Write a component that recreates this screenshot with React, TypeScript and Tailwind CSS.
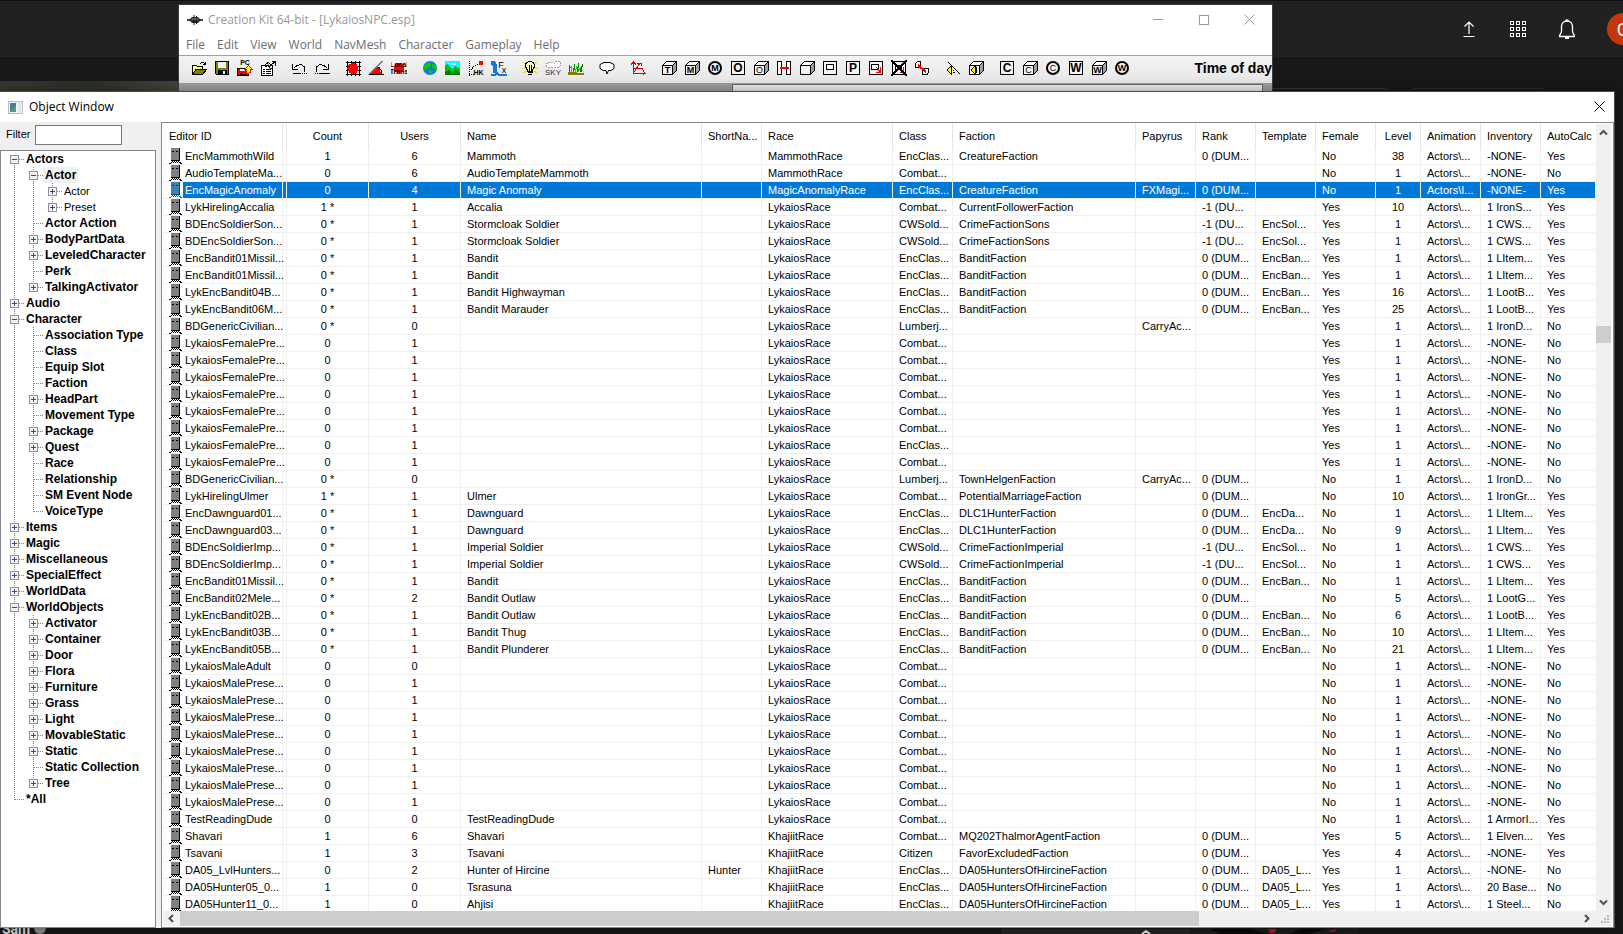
import React, { useState } from 'react';

type Row = string[];

const COLUMNS = [
  { label: 'Editor ID', width: 'w-[120px]', center: false },
  { label: '', width: 'w-[4px]', center: false },
  { label: 'Count', width: 'w-[82px]', center: true },
  { label: 'Users', width: 'w-[92px]', center: true },
  { label: 'Name', width: 'w-[241px]', center: false },
  { label: 'ShortNa...', width: 'w-[60px]', center: false },
  { label: 'Race', width: 'w-[131px]', center: false },
  { label: 'Class', width: 'w-[60px]', center: false },
  { label: 'Faction', width: 'w-[183px]', center: false },
  { label: 'Papyrus', width: 'w-[60px]', center: false },
  { label: 'Rank', width: 'w-[60px]', center: false },
  { label: 'Template', width: 'w-[60px]', center: false },
  { label: 'Female', width: 'w-[60px]', center: false },
  { label: 'Level', width: 'w-[45px]', center: true },
  { label: 'Animation', width: 'w-[60px]', center: false },
  { label: 'Inventory', width: 'w-[60px]', center: false },
  { label: 'AutoCalc', width: '', center: false },
];

const LYK = 'LykaiosRace';
const ENC = 'EncClas...';
const COM = 'Combat...';
const CW = 'CWSold...';
const DUM = '0 (DUM...';
const DU = '-1 (DU...';
const ACT = 'Actors\\...';
const NONE = '-NONE-';

const female = (cls: string): Row => ['LykaiosFemalePre...', '', '0', '1', '', '', LYK, cls, '', '', '', '', 'Yes', '1', ACT, NONE, 'No'];
const male = (): Row => ['LykaiosMalePrese...', '', '0', '1', '', '', LYK, COM, '', '', '', '', 'No', '1', ACT, NONE, 'No'];
const stormcloak = (): Row => ['BDEncSoldierSon...', '', '0 *', '1', 'Stormcloak Soldier', '', LYK, CW, 'CrimeFactionSons', '', DU, 'EncSol...', 'Yes', '1', ACT, '1 CWS...', 'Yes'];
const imperial = (): Row => ['BDEncSoldierImp...', '', '0 *', '1', 'Imperial Soldier', '', LYK, CW, 'CrimeFactionImperial', '', DU, 'EncSol...', 'No', '1', ACT, '1 CWS...', 'Yes'];
const bandit = (id: string, users: string, name: string, template: string, sex: string, level: string, inventory: string): Row =>
  [id, '', '0 *', users, name, '', LYK, ENC, 'BanditFaction', '', DUM, template, sex, level, ACT, inventory, 'Yes'];
const hunter = (id: string, count: string, users: string, name: string, short: string, inventory: string): Row =>
  [id, '', count, users, name, short, 'KhajiitRace', ENC, 'DA05HuntersOfHircineFaction', '', DUM, 'DA05_L...', 'Yes', '1', ACT, inventory, 'No'];

const ROWS: Row[] = [
  ['EncMammothWild', '', '1', '6', 'Mammoth', '', 'MammothRace', ENC, 'CreatureFaction', '', DUM, '', 'No', '38', ACT, NONE, 'Yes'],
  ['AudioTemplateMa...', '', '0', '6', 'AudioTemplateMammoth', '', 'MammothRace', COM, '', '', '', '', 'No', '1', ACT, NONE, 'No'],
  ['EncMagicAnomaly', '', '0', '4', 'Magic Anomaly', '', 'MagicAnomalyRace', ENC, 'CreatureFaction', 'FXMagi...', DUM, '', 'No', '1', 'Actors\\I...', NONE, 'Yes'],
  ['LykHirelingAccalia', '', '1 *', '1', 'Accalia', '', LYK, COM, 'CurrentFollowerFaction', '', DU, '', 'Yes', '10', ACT, '1 IronS...', 'Yes'],
  stormcloak(),
  stormcloak(),
  bandit('EncBandit01Missil...', '1', 'Bandit', 'EncBan...', 'Yes', '1', '1 LItem...'),
  bandit('EncBandit01Missil...', '1', 'Bandit', 'EncBan...', 'Yes', '1', '1 LItem...'),
  bandit('LykEncBandit04B...', '1', 'Bandit Highwayman', 'EncBan...', 'Yes', '16', '1 LootB...'),
  bandit('LykEncBandit06M...', '1', 'Bandit Marauder', 'EncBan...', 'Yes', '25', '1 LootB...'),
  ['BDGenericCivilian...', '', '0 *', '0', '', '', LYK, 'Lumberj...', '', 'CarryAc...', '', '', 'Yes', '1', ACT, '1 IronD...', 'No'],
  female(COM),
  female(COM),
  female(COM),
  female(COM),
  female(COM),
  female(COM),
  female(ENC),
  female(COM),
  ['BDGenericCivilian...', '', '0 *', '0', '', '', LYK, 'Lumberj...', 'TownHelgenFaction', 'CarryAc...', DUM, '', 'No', '1', ACT, '1 IronD...', 'No'],
  ['LykHirelingUlmer', '', '1 *', '1', 'Ulmer', '', LYK, COM, 'PotentialMarriageFaction', '', DUM, '', 'No', '10', ACT, '1 IronGr...', 'Yes'],
  ['EncDawnguard01...', '', '0 *', '1', 'Dawnguard', '', LYK, ENC, 'DLC1HunterFaction', '', DUM, 'EncDa...', 'No', '1', ACT, '1 LItem...', 'Yes'],
  ['EncDawnguard03...', '', '0 *', '1', 'Dawnguard', '', LYK, ENC, 'DLC1HunterFaction', '', DUM, 'EncDa...', 'No', '9', ACT, '1 LItem...', 'Yes'],
  imperial(),
  imperial(),
  bandit('EncBandit01Missil...', '1', 'Bandit', 'EncBan...', 'No', '1', '1 LItem...'),
  bandit('EncBandit02Mele...', '2', 'Bandit Outlaw', '', 'No', '5', '1 LootG...'),
  bandit('LykEncBandit02B...', '1', 'Bandit Outlaw', 'EncBan...', 'No', '6', '1 LootB...'),
  bandit('LykEncBandit03B...', '1', 'Bandit Thug', 'EncBan...', 'No', '10', '1 LItem...'),
  bandit('LykEncBandit05B...', '1', 'Bandit Plunderer', 'EncBan...', 'No', '21', '1 LItem...'),
  ['LykaiosMaleAdult', '', '0', '0', '', '', LYK, COM, '', '', '', '', 'No', '1', ACT, NONE, 'No'],
  male(),
  male(),
  male(),
  male(),
  male(),
  male(),
  male(),
  male(),
  ['TestReadingDude', '', '0', '0', 'TestReadingDude', '', LYK, COM, '', '', '', '', 'No', '1', ACT, '1 ArmorI...', 'Yes'],
  ['Shavari', '', '1', '6', 'Shavari', '', 'KhajiitRace', COM, 'MQ202ThalmorAgentFaction', '', DUM, '', 'Yes', '5', ACT, '1 Elven...', 'Yes'],
  ['Tsavani', '', '1', '3', 'Tsavani', '', 'KhajiitRace', 'Citizen', 'FavorExcludedFaction', '', DUM, '', 'Yes', '4', ACT, NONE, 'Yes'],
  hunter('DA05_LvlHunters...', '0', '2', 'Hunter of Hircine', 'Hunter', NONE),
  hunter('DA05Hunter05_0...', '1', '0', 'Tsrasuna', '', '20 Base...'),
  hunter('DA05Hunter11_0...', '1', '0', 'Ahjisi', '', '1 Steel...'),
];

// guides: one letter per indent column.
// v = passing line, p/m = plus/minus box, t = branch, l = last branch, P = plus box on the last branch
const TREE: [string, string][] = [
  ['f', 'Actors'],
  ['vF', 'Actor'],
  ['vvp', 'Actor'],
  ['vvP', 'Preset'],
  ['vt', 'Actor Action'],
  ['vp', 'BodyPartData'],
  ['vp', 'LeveledCharacter'],
  ['vt', 'Perk'],
  ['vP', 'TalkingActivator'],
  ['p', 'Audio'],
  ['m', 'Character'],
  ['vt', 'Association Type'],
  ['vt', 'Class'],
  ['vt', 'Equip Slot'],
  ['vt', 'Faction'],
  ['vp', 'HeadPart'],
  ['vt', 'Movement Type'],
  ['vp', 'Package'],
  ['vp', 'Quest'],
  ['vt', 'Race'],
  ['vt', 'Relationship'],
  ['vt', 'SM Event Node'],
  ['vl', 'VoiceType'],
  ['p', 'Items'],
  ['p', 'Magic'],
  ['p', 'Miscellaneous'],
  ['p', 'SpecialEffect'],
  ['p', 'WorldData'],
  ['m', 'WorldObjects'],
  ['vp', 'Activator'],
  ['vp', 'Container'],
  ['vp', 'Door'],
  ['vp', 'Flora'],
  ['vp', 'Furniture'],
  ['vp', 'Grass'],
  ['vp', 'Light'],
  ['vp', 'MovableStatic'],
  ['vp', 'Static'],
  ['vt', 'Static Collection'],
  ['vP', 'Tree'],
  ['l', '*All'],
];

const Guide: React.FC<{ kind: string }> = ({ kind }) => {
  const half = kind === 'l' || kind === 'P';
  const first = kind === 'f';
  const box = 'pPmfF'.includes(kind);
  const minus = 'mfF'.includes(kind);
  return (
    <svg width="19" height="16" viewBox="0 0 19 16" shapeRendering="crispEdges" className="shrink-0" aria-hidden="true">
      <path d={`M9.5 ${first ? 8 : 0}V${half ? 9 : 16}`} stroke="#808080" strokeDasharray="1 1" />
      {kind !== 'v' && <path d="M10 8.5H19" stroke="#808080" strokeDasharray="1 1" />}
      {box && <rect x="5.5" y="4.5" width="8" height="8" rx="1" fill="#f4f4f4" stroke="#919191" />}
      {box && <path d="M7 8.5H12" stroke="#2b4a9b" />}
      {box && !minus && <path d="M9.5 6V11" stroke="#2b4a9b" />}
    </svg>
  );
};

const ActorIcon: React.FC<{ selected: boolean }> = ({ selected }) => (
  <svg width="16" height="16" viewBox="0 0 16 16" shapeRendering="crispEdges" className="shrink-0" aria-hidden="true">
    <rect x="4" y="0" width="8" height="12" fill={selected ? '#4080b4' : '#808080'} />
    <path d="M12.5 0V13M4 12.5H13" stroke={selected ? '#004a8c' : '#000'} />
    <path d="M5 3h2v1h-2zM9 3h2v1h-2z" fill={selected ? '#00305c' : '#000'} />
    <path d="M5 13.5H12M4 14.5H12" stroke={selected ? '#0060b0' : '#000'} strokeDasharray="1 1" />
    <path d="M2 15.5H4M4 14.5H5M12 14.5H14M13 15.5H15" stroke={selected ? '#0078d7' : '#000'} />
  </svg>
);

const Letter: React.FC<{ x: number; y: number; size: number; children: string; bold?: boolean; color?: string }> = ({ x, y, size, children, bold = true, color = '#000' }) => (
  <text x={x} y={y} fontSize={size} fontWeight={bold ? 700 : 400} textAnchor="middle" fontFamily="Liberation Sans, sans-serif" fill={color}>
    {children}
  </text>
);

const Cube: React.FC<{ letter?: string; bold?: boolean }> = ({ letter, bold }) => (
  <>
    <path d="M1.5 5.5L5.5 1.5H15.5L11.5 5.5Z" fill="#fff" stroke="#000" />
    <path d="M11.5 5.5L15.5 1.5V10.5L11.5 14.5Z" fill="#a0a0a0" stroke="#000" />
    <rect x="1.5" y="5.5" width="10" height="9" fill="#f4f4f4" stroke="#000" />
    {letter && <Letter x={6.5} y={13} size={9} bold={bold}>{letter}</Letter>}
  </>
);

const Square: React.FC<{ letter?: string }> = ({ letter }) => (
  <>
    <rect x="1.5" y="1.5" width="13" height="13" fill="#f4f4f4" stroke="#000" />
    {letter && <Letter x={8} y={12} size={12}>{letter}</Letter>}
  </>
);

const Ring: React.FC<{ letter: string; bold?: boolean }> = ({ letter, bold }) => (
  <>
    <circle cx="8" cy="8" r="6" fill="#f4f4f4" stroke="#000" strokeWidth="2" shapeRendering="auto" />
    <Letter x={8} y={11} size={9} bold={bold}>{letter}</Letter>
  </>
);

const TOOL_GROUPS: { name: string; art: React.ReactNode }[][] = [
  [
    {
      name: 'Open',
      art: (
        <>
          <path d="M1.5 14.5V5.5H5.5L6.5 6.5H11.5V9" fill="#ffff80" stroke="#000" />
          <path d="M1.5 14.5L5 9.5H15.5L11.5 14.5Z" fill="#808000" stroke="#000" />
          <path d="M9 3.5L10.5 2.5H12.5L14.5 4.5M14.5 2V5M12 4.5H15" fill="none" stroke="#000" />
        </>
      ),
    },
    {
      name: 'Save',
      art: (
        <>
          <path d="M1.5 1.5H14.5V14.5H2.5L1.5 13.5Z" fill="#808000" stroke="#000" />
          <rect x="4" y="2" width="8" height="6" fill="#f0f0f0" />
          <rect x="4" y="10" width="9" height="5" fill="#000" />
          <rect x="9" y="11" width="2" height="3" fill="#f0f0f0" />
        </>
      ),
    },
    {
      name: 'Save for PC',
      art: (
        <>
          <path d="M0.5 8.5H11.5V15.5H0.5Z" fill="#f00" stroke="#000" />
          <path d="M3 9H8V11H3Z" fill="#f0f0f0" />
          <path d="M3 13H9V16H3Z" fill="#000" />
          <path d="M6 13.5L9.500 12V9.500H7.500L11.500 5.500L15.500 9.500H13.500V12L10 14Z" fill="#ff0" stroke="#f00" />
          <Letter x={8} y={5} size={7}>PC</Letter>
        </>
      ),
    },
    {
      name: 'Properties',
      art: (
        <>
          <path d="M1.5 5.5H12.5V15.5H1.5Z" fill="#fff" stroke="#000" />
          <path d="M3 9.5H5M6 9.5H11M3 11.5H5M6 11.5H11M3 13.5H5M6 13.5H11" stroke="#000" />
          <path d="M4 6L8 2.5L11 4.5L15 2M5 7L8 5L10 8H12" fill="none" stroke="#000" />
          <path d="M15.5 1V6M12 1.5H15" stroke="#000080" />
          <path d="M8 4L11 7" stroke="#a0a0a0" />
        </>
      ),
    },
  ],
  [
    {
      name: 'Undo',
      art: (
        <>
          <path d="M3 8L6 5.5L10 4.5L13 6.5L14 9L13 11.5" fill="none" stroke="#000" />
          <path d="M1.5 4V9.5H7" fill="none" stroke="#000" />
          <path d="M2 13.5H10" stroke="#000" />
          <path d="M11 13.5H16" stroke="#000" strokeDasharray="1 1" />
        </>
      ),
    },
    {
      name: 'Redo',
      art: (
        <>
          <path d="M13 8L10 5.5L6 4.5L3 6.5L2 9L3 11.5" fill="none" stroke="#000" />
          <path d="M14.5 4V9.5H9" fill="none" stroke="#000" />
          <path d="M6 13.5H16" stroke="#000" />
          <path d="M1 13.5H6" stroke="#000" strokeDasharray="1 1" />
        </>
      ),
    },
  ],
  [
    {
      name: 'Snap to grid',
      art: (
        <>
          <path d="M2.5 1V16M6.5 1V16M10.5 1V16M14.5 1V16M1 2.5H16M1 6.5H16M1 10.5H16M1 14.5H16" stroke="#000" />
          <circle cx="8" cy="8.5" r="5.5" fill="#f00" />
        </>
      ),
    },
    {
      name: 'Snap to angle',
      art: (
        <>
          <path d="M1 14.5L14.5 1" stroke="#000" shapeRendering="auto" />
          <path d="M2 14L9 7L12 9.5L13 14Z" fill="#f00" />
          <path d="M1 14.5H16M10.500 7L13 10V14" fill="none" stroke="#000" />
        </>
      ),
    },
    {
      name: 'Local transform',
      art: (
        <>
          <circle cx="8" cy="8" r="5" fill="#f00" />
          <Letter x={8} y={7} size={7}>Local</Letter>
          <Letter x={8} y={14} size={7}>Trans</Letter>
        </>
      ),
    },
  ],
  [
    {
      name: 'World testing',
      art: (
        <>
          <circle cx="8" cy="8" r="7" fill="#1478d8" shapeRendering="auto" />
          <path d="M3 4L8 2L9 5L6 8L3 9L1 8ZM10 4L14 5L15 9L12 10L10 7ZM7 10L11 11L9 14L7 13Z" fill="#00d000" />
        </>
      ),
    },
    {
      name: 'Landscape editing',
      art: (
        <>
          <rect x="0" y="1" width="15" height="14" fill="#00ffff" />
          <path d="M0 5L3 4L7 9L10 6L12 7L15 9V15H0Z" fill="#00c000" />
          <path d="M0 12L4 10L7 13L11 10L15 13V15H0Z" fill="#008000" />
          <path d="M6 3h5v2H6zM3 3h2v1H3z" fill="#fff" />
        </>
      ),
    },
    {
      name: 'Havok',
      art: (
        <>
          <path d="M1.5 1V16M1 14.5H6" stroke="#000" strokeDasharray="1 1" />
          <path d="M3 10L6 6L11 4" fill="none" stroke="#000" strokeDasharray="1 1" />
          <circle cx="13" cy="3" r="2.5" fill="#f00" />
          <Letter x={10.5} y={15} size={7}>HK</Letter>
        </>
      ),
    },
    {
      name: 'Effects',
      art: (
        <>
          <path d="M0 1H4L6 5V13H2V7L0 5Z" fill="#1478d8" />
          <path d="M0 15H4L6 13L8 15H16" fill="none" stroke="#1478d8" strokeWidth="2" />
          <Letter x={10} y={8} size={9} bold={false}>F</Letter>
          <Letter x={13} y={13} size={9} bold={false}>x</Letter>
        </>
      ),
    },
  ],
  [
    {
      name: 'Lights',
      art: (
        <>
          <path d="M0 2L4 4M0 8H3M1 13L4 11M15 2L12 4M16 8H13M15 13L12 11" stroke="#e8e000" />
          <path d="M8 1.5C5 1.5 3.5 3.5 3.5 6C3.5 8 5.5 9 5.5 11H10.5C10.5 9 12.5 8 12.5 6C12.5 3.5 11 1.5 8 1.5Z" fill="#ffffc0" stroke="#000" />
          <path d="M7 5V11M9 5V11" stroke="#000" />
          <path d="M6 12.5H11M6 14.5H10" stroke="#000" />
          <path d="M7 13.5H10" stroke="#e8e000" />
        </>
      ),
    },
    {
      name: 'Sky',
      art: (
        <>
          <path d="M2 7L1 4L4 2H7L9 4L11 1H15V6L13 8Z" fill="#fff" stroke="#a0a0a0" strokeDasharray="2 1" />
          <Letter x={8} y={15} size={8} bold={false} color="#303030">SKY</Letter>
        </>
      ),
    },
    {
      name: 'Grass',
      art: (
        <>
          <path d="M2 12L1 5M4 12L3 8L1 7M5 12L7 4M8 12L6 7M9 12L11 3M11 12L9 7M12 12L15 4M13 12V6" fill="none" stroke="#008000" />
          <path d="M3 12L4 6M7 12L9 6M10 12L13 7" stroke="#00e000" />
          <path d="M0 12H8L9 13H16V15H0Z" fill="#808000" />
        </>
      ),
    },
  ],
  [
    {
      name: 'Dialogue',
      art: (
        <path
          d="M5 2.5H11L15 4.5V8.5L12 10.5H9.5L8 14L7 10.5H4L1 8.5V4.5Z"
          fill="#fff"
          stroke="#000"
          shapeRendering="auto"
        />
      ),
    },
  ],
  [
    {
      name: 'Axes',
      art: (
        <path d="M3.5 2V13.5H15M1 4.5L3.5 2L6 4.5M13 11L15 13.5L13 15M3.5 13L10 3M7 3H11V6M4 8L12 8L14 12" fill="none" stroke="#e00000" />
      ),
    },
  ],
  [
    { name: 'Trigger cube', art: <Cube letter="T" /> },
    { name: 'Multibound cube', art: <Cube letter="M" /> },
    { name: 'Multibound sphere', art: <Ring letter="M" /> },
    { name: 'Occlusion plane', art: <Square letter="O" /> },
    { name: 'Occlusion cube', art: <Cube letter="O" bold={false} /> },
    {
      name: 'Link planes',
      art: (
        <>
          <path d="M1.5 1.5H5.5V14.5H1.5ZM10.5 1.5H14.5V14.5H10.5Z" fill="#fff" stroke="#000" />
          <path d="M4 8H13" stroke="#f00" strokeWidth="2" />
        </>
      ),
    },
    { name: 'Room bound', art: <Cube /> },
    {
      name: 'Portal',
      art: (
        <>
          <Square />
          <rect x="4.5" y="4.5" width="7" height="5" fill="#fff" stroke="#000" />
        </>
      ),
    },
    { name: 'Planar marker', art: <Square letter="P" /> },
    {
      name: 'Portal link',
      art: (
        <>
          <Square />
          <rect x="3.5" y="4.5" width="7" height="5" fill="#fff" stroke="#000" />
          <path d="M8 7L12.5 12M12.5 7V12.5H8" fill="none" stroke="#f00" />
        </>
      ),
    },
    {
      name: 'Remove portal',
      art: (
        <>
          <Square />
          <rect x="4.5" y="5.5" width="6" height="4" fill="#fff" stroke="#000" />
          <path d="M12.5 7V12.5H9" fill="none" stroke="#f00" />
          <path d="M0 0L16 16M16 0L0 16" stroke="#000" strokeWidth="2" />
        </>
      ),
    },
    {
      name: 'Link references',
      art: (
        <>
          <path d="M1.5 3.5L3.5 1.5H6.5V5.5L5 7.5H1.5Z" fill="#fff" stroke="#000" />
          <path d="M8.5 10.5L10.5 8.5H14.5V12.5L13 14.5H8.5Z" fill="#fff" stroke="#000" />
          <path d="M4 5L12 12" stroke="#f00" strokeWidth="2" />
        </>
      ),
    },
  ],
  [
    {
      name: 'Sound marker',
      art: (
        <>
          <path d="M2 10L6 6V14Z" fill="#ff0" stroke="#000" />
          <path d="M3 2L15 14" stroke="#000" />
          <path d="M8 10H9M8 12H10" stroke="#000" />
        </>
      ),
    },
    {
      name: 'Acoustic space',
      art: (
        <>
          <Cube />
          <path d="M3 10L7 6V14Z" fill="#ff0" stroke="#000" />
          <path d="M8.5 7V13" stroke="#000" />
        </>
      ),
    },
  ],
  [
    { name: 'Collision plane', art: <Square letter="C" /> },
    { name: 'Collision cube', art: <Cube letter="C" bold={false} /> },
    { name: 'Collision sphere', art: <Ring letter="C" bold={false} /> },
    { name: 'Water plane', art: <Square letter="W" /> },
    { name: 'Water cube', art: <Cube letter="W" /> },
    { name: 'Water sphere', art: <Ring letter="W" /> },
  ],
];

const MENUS = ['File', 'Edit', 'View', 'World', 'NavMesh', 'Character', 'Gameplay', 'Help'];

const CloseGlyph: React.FC<{ color: string }> = ({ color }) => (
  <svg width="11" height="11" viewBox="0 0 11 11" aria-hidden="true">
    <path d="M0.5 0.5L10.5 10.5M10.5 0.5L0.5 10.5" stroke={color} fill="none" />
  </svg>
);

const Arrow: React.FC<{ d: string }> = ({ d }) => (
  <svg width="9" height="9" viewBox="0 0 9 9" aria-hidden="true">
    <path d={d} stroke="#505050" strokeWidth="2" fill="none" />
  </svg>
);

const Backdrop: React.FC = () => (
  <div className="flex h-full flex-col bg-[#181818]">
    <header className="flex h-[57px] shrink-0 items-center justify-end gap-[27px] overflow-hidden border-t border-[#10101c] bg-[#212121]">
      <button aria-label="Upload" className="flex size-[22px] items-center justify-center">
        <svg width="12" height="16" viewBox="0 0 12 16" fill="none" stroke="#fff" aria-hidden="true">
          <path d="M6 13V1M1.5 5.5L6 1L10.5 5.5M0.5 15.5H11.5" strokeWidth="1.2" />
        </svg>
      </button>
      <button aria-label="Apps" className="flex size-[22px] items-center justify-center">
        <svg width="16" height="16" viewBox="0 0 16 16" fill="none" stroke="#fff" shapeRendering="crispEdges" aria-hidden="true">
          <path d="M0.5 0.5h3v3h-3zM6.5 0.5h3v3h-3zM12.5 0.5h3v3h-3zM0.5 6.5h3v3h-3zM6.5 6.5h3v3h-3zM12.5 6.5h3v3h-3zM0.5 12.5h3v3h-3zM6.5 12.5h3v3h-3zM12.5 12.5h3v3h-3z" />
        </svg>
      </button>
      <button aria-label="Notifications" className="flex size-[22px] items-center justify-center">
        <svg width="18" height="20" viewBox="0 0 18 20" fill="none" stroke="#fff" aria-hidden="true">
          <path d="M9 2C5.5 2 3.5 4.5 3.5 7.5V12.5C3.5 14 1.5 15.5 1.5 17.5H16.5C16.5 15.5 14.5 14 14.5 12.5V7.5C14.5 4.5 12.5 2 9 2Z" strokeWidth="1.3" />
          <path d="M7.5 1.5H10.5M7 19H11" strokeWidth="2" />
        </svg>
      </button>
      <button aria-label="Account" className="-mr-4 ml-[2px] flex size-8 items-center justify-center rounded-full bg-[#c4370c] text-[18px] text-white [font-family:Roboto,sans-serif]">
        G
      </button>
    </header>
    <div className="flex h-[34px] shrink-0 items-end justify-between">
      <div className="h-[10px] w-[179px] bg-linear-to-r from-[#3a382e] via-[#2b3029] to-[#45443a]" />
      <div className="flex w-[351px] gap-6">
        <div className="h-[3px] w-[115px] rounded-tr-lg border-t border-[#383838]" />
        <div className="h-[3px] w-[132px] rounded-tl-lg border-t border-[#2c2c2c]" />
      </div>
    </div>
    <div className="flex grow items-end overflow-hidden">
      <span className="pl-[2px] text-[14px] leading-[10px] font-bold text-[#d8d8d8] [font-family:Roboto,sans-serif]">Sam</span>
      <span className="ml-1 size-3 rounded-full bg-[#8a8a8a]" />
      <span className="ml-auto flex h-[5px] w-[188px] items-end justify-center bg-[#242424] pl-[100px]">
        <svg width="10" height="4" viewBox="0 0 10 4" aria-hidden="true">
          <path d="M1 4L5 1L9 4" stroke="#ddd" strokeWidth="2" fill="none" />
        </svg>
      </span>
      <svg width="168" height="5" viewBox="0 0 168 5" className="mr-[265px]" aria-hidden="true">
        <rect width="168" height="5" fill="#1c1c1c" />
        <path d="M20 0H60L78 5H30ZM110 0H135L120 5H100Z" fill="#080808" />
        <path d="M78 0H87L84 4H80ZM138 2L147 0L144 3Z" fill="#b01828" />
      </svg>
    </div>
  </div>
);

const MainWindow: React.FC = () => (
  <section aria-label="Creation Kit" className="absolute top-[4px] right-[350px] bottom-[300px] left-[178px] flex flex-col border border-[#3c3c3c] bg-[#a0a0a0]">
    <div className="flex h-[29px] shrink-0 items-center bg-white pl-2">
      <svg width="16" height="10" viewBox="0 0 16 10" aria-hidden="true">
        <path d="M0 5H16" stroke="#3c464c" strokeWidth="2" />
        <path d="M2 5L5 2H11L14 5L11 8H5Z" fill="#2a3338" />
        <path d="M7 0V10M9.5 1V9" stroke="#111" />
        <path d="M5 4H11" stroke="#7f98a4" />
      </svg>
      <h1 className="ml-[5px] grow text-[12px] text-[#999]">Creation Kit 64-bit - [LykaiosNPC.esp]</h1>
      <button aria-label="Minimize" className="flex h-full w-[46px] items-center justify-center">
        <span className="h-px w-[10px] bg-[#999]" />
      </button>
      <button aria-label="Maximize" className="flex h-full w-[45px] items-center justify-center">
        <span className="size-[10px] border border-[#999]" />
      </button>
      <button aria-label="Close" className="flex h-full w-[46px] items-center justify-center">
        <CloseGlyph color="#999" />
      </button>
    </div>
    <nav className="flex h-[21px] shrink-0 items-center gap-3 bg-white pl-[7px] text-[12px] text-[#6d6d6d]">
      {MENUS.map((menu) => (
        <button key={menu}>{menu}</button>
      ))}
    </nav>
    <div className="flex h-[28px] shrink-0 items-center overflow-hidden border-t border-[#a0a0a0] bg-linear-to-b from-[#f4f4f4] to-[#e6e6e6] pb-[3px] pl-2">
      <div className="flex shrink-0 gap-2">
        {TOOL_GROUPS.map((group, g) => (
          <div key={g} className="flex">
            {group.map((tool) => (
              <button key={tool.name} aria-label={tool.name} className="flex h-[24px] w-[23px] items-center justify-center">
                <svg width="16" height="16" viewBox="0 0 16 16" shapeRendering="crispEdges" aria-hidden="true">
                  {tool.art}
                </svg>
              </button>
            ))}
          </div>
        ))}
      </div>
      <span className="ml-auto text-[14px] font-bold whitespace-nowrap text-black [font-family:'Liberation_Sans',sans-serif]">Time of day</span>
    </div>
    <div className="mt-px mr-[9px] ml-[553px] grow border border-[#6a6a6a] bg-[#f0eef0]" />
  </section>
);

const TreePanel: React.FC = () => {
  const [filter, setFilter] = useState('');
  return (
    <aside className="flex w-[156px] shrink-0 flex-col text-[11px] text-black [font-family:'Liberation_Sans',sans-serif]">
      <div className="flex h-[28px] shrink-0 items-center pl-[6px]">
        <label htmlFor="filter" className="w-[29px] pb-1">Filter</label>
        <input
          id="filter"
          value={filter}
          onChange={(e) => setFilter(e.target.value)}
          className="mt-px mb-1 h-5 w-[87px] border border-[#7a7a7a] bg-white px-1 outline-none"
        />
      </div>
      <ul className="min-h-0 grow overflow-hidden border border-[#828790] bg-white">
        {TREE.map(([guides, label], i) => (
          <li key={i} className="flex h-4 items-center pl-1">
            {guides.split('').map((kind, k) => (
              <Guide key={k} kind={kind} />
            ))}
            <span
              className={
                guides.length === 3
                  ? 'px-[2px] leading-[16px] whitespace-nowrap'
                  : guides === 'vF'
                    ? 'bg-[#f0f0f0] px-[2px] text-[12px] leading-[16px] font-bold whitespace-nowrap'
                    : 'px-[2px] text-[12px] leading-[16px] font-bold whitespace-nowrap'
              }
            >
              {label}
            </span>
          </li>
        ))}
      </ul>
    </aside>
  );
};

const ObjectTable: React.FC = () => {
  const [selected, setSelected] = useState(2);
  return (
    <table className="w-full table-fixed border-separate border-spacing-0 text-left text-[11px] text-black">
      <colgroup>
        {COLUMNS.map((col, i) => (
          <col key={i} className={col.width} />
        ))}
      </colgroup>
      <thead>
        <tr className="h-[24px]">
          {COLUMNS.map((col, i) => (
            <th
              key={i}
              scope="col"
              className={`overflow-hidden border-r border-[#e5e5e5] p-0 font-normal whitespace-nowrap last:border-r-0 ${col.center ? 'text-center' : i === 1 ? '' : 'pl-[6px]'}`}
            >
              {col.label}
            </th>
          ))}
        </tr>
      </thead>
      <tbody>
        {ROWS.map((row, r) => {
          const active = r === selected;
          return (
            <tr key={r} onClick={() => setSelected(r)} className={active ? 'h-[17px] text-white' : 'h-[17px]'}>
              {row.map((cell, c) => (
                <td
                  key={c}
                  className={`border-r border-b border-[#f0f0f0] p-0 leading-[16px] whitespace-nowrap last:border-r-0 ${c > 0 ? 'overflow-hidden' : ''} ${active && c > 0 ? 'bg-[#0078d7]' : ''} ${COLUMNS[c].center ? 'text-center' : c > 1 ? 'pl-[6px]' : ''}`}
                >
                  {c === 0 ? (
                    <div className="flex h-4 pl-1">
                      <ActorIcon selected={active} />
                      <span className={active ? 'grow bg-[#0078d7] pl-[2px]' : 'grow pl-[2px]'}>{cell}</span>
                    </div>
                  ) : (
                    cell
                  )}
                </td>
              ))}
            </tr>
          );
        })}
      </tbody>
    </table>
  );
};

const ObjectWindow: React.FC = () => (
  <section aria-label="Object Window" className="absolute top-[91px] right-[8px] bottom-[6px] left-0 flex flex-col border-t border-r border-[#4a4a4a] bg-[#f0f0f0] shadow-[0_0_12px_rgba(0,0,0,0.4)]">
    <div className="flex h-[30px] shrink-0 items-center bg-white pl-2">
      <svg width="15" height="13" viewBox="0 0 15 13" shapeRendering="crispEdges" aria-hidden="true">
        <rect x="0.5" y="0.5" width="14" height="12" fill="#eef2f4" stroke="#b4bcc2" />
        <rect x="2" y="2" width="6" height="9" fill="#4a7f9a" />
        <path d="M2 11L8 4V11Z" fill="#4fa070" />
        <rect x="10" y="2" width="3" height="9" fill="#dfe5ea" />
      </svg>
      <h2 className="ml-[6px] grow text-[12px] text-black">Object Window</h2>
      <button aria-label="Close" className="flex h-full w-[30px] items-center justify-center pb-[2px]">
        <CloseGlyph color="#000" />
      </button>
    </div>
    <div className="flex min-h-0 grow gap-[5px]">
      <TreePanel />
      <main className="flex min-w-0 grow flex-col border border-[#828790] bg-white p-px [font-family:'Liberation_Sans',sans-serif]">
        <div className="flex min-h-0 grow">
          <div className="min-w-0 grow overflow-hidden">
            <ObjectTable />
          </div>
          <div className="flex w-[17px] shrink-0 flex-col border-x border-white bg-[#f0f0f0]">
            <button aria-label="Scroll up" className="flex h-[17px] items-center justify-center">
              <Arrow d="M1 6.5L4.5 3L8 6.5" />
            </button>
            <div className="grow-[185]" />
            <div className="h-[17px] bg-[#cdcdcd]" />
            <div className="grow-[551]" />
            <button aria-label="Scroll down" className="flex h-[17px] items-center justify-center">
              <Arrow d="M1 2.5L4.5 6L8 2.5" />
            </button>
          </div>
        </div>
        <div className="flex h-[15px] shrink-0 bg-[#f0f0f0]">
          <button aria-label="Scroll left" className="flex w-[17px] items-center justify-center">
            <Arrow d="M6 1L2.5 4.5L6 8" />
          </button>
          <div className="grow-[1020] bg-[#cdcdcd]" />
          <div className="grow-[379]" />
          <button aria-label="Scroll right" className="flex w-[17px] items-center justify-center">
            <Arrow d="M3 1L6.5 4.5L3 8" />
          </button>
          <div className="flex w-[17px] items-end justify-end p-[2px]">
            <svg width="9" height="9" viewBox="0 0 9 9" fill="#b8b8b8" shapeRendering="crispEdges" aria-hidden="true">
              <path d="M6 0h2v2h-2zM3 3h2v2h-2zM6 3h2v2h-2zM0 6h2v2h-2zM3 6h2v2h-2zM6 6h2v2h-2z" />
            </svg>
          </div>
        </div>
      </main>
    </div>
  </section>
);

export default function App() {
  return (
    <div className="relative h-screen overflow-hidden [font-family:'Open_Sans',sans-serif]">
      <Backdrop />
      <MainWindow />
      <ObjectWindow />
    </div>
  );
}
